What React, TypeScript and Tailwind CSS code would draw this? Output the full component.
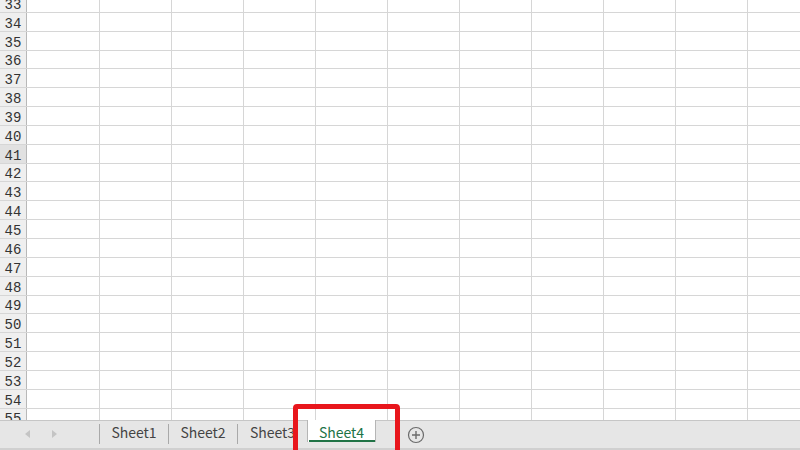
import React from "react";

const rows = Array.from({ length: 23 }, (_, i) => 33 + i);
const cols = Array.from({ length: 10 }, (_, i) => i);

function PlusIcon() {
  return (
    <svg width="18" height="18" viewBox="0 0 18 18" fill="none">
      <circle cx="9" cy="9" r="7.5" stroke="#6b6b6b" strokeWidth="1.2" />
      <path d="M9 5v8M5 9h8" stroke="#6b6b6b" strokeWidth="1.4" />
    </svg>
  );
}

function Tab({ name, last }: { name: string; last?: boolean }) {
  return (
    <div className={`w-[69px] my-[3px] h-[20px] flex items-center justify-center pb-[5px] text-[14px] leading-none text-[#444] ${last ? "" : "border-r border-[#a9a9a9]"}`}>
      {name}
    </div>
  );
}

export default function App() {
  return (
    <div className="relative w-[800px] h-[450px] bg-white overflow-hidden flex flex-col" style={{ fontFamily: '"Noto Sans CJK SC", "Noto Sans", sans-serif' }}>
      {/* grid */}
      <div className="h-[420px] overflow-hidden">
        <div className="-mt-[6px]">
          {rows.map((r) => (
            <div key={r} className="flex h-[18.85px] border-b border-[#d6d6d6]">
              <div
                className={`w-[27px] shrink-0 flex items-end justify-center leading-none border-r border-[#b8b8b8] text-[14px] text-[#333] ${r === 41 ? "bg-[#e1e1e1]" : "bg-[#efefef]"}`}
                style={{ fontFamily: '"Liberation Mono", monospace' }}
              >
                {r}
              </div>
              <div className="w-[73px] shrink-0 border-r border-[#d6d6d6]" />
              {cols.map((c) => (
                <div key={c} className="w-[72px] shrink-0 border-r border-[#d6d6d6]" />
              ))}
            </div>
          ))}
        </div>
      </div>

      {/* sheet tab bar */}
      <div className="h-[30px] flex bg-[#e6e6e6] border-t border-[#c6c6c6] border-b-2 border-b-[#d0d0d0]">
        <div className="w-[100px] flex items-center pl-[25px] gap-[22px] border-r border-[#a9a9a9] my-[3px] h-[20px]">
          <span className="w-0 h-0 border-y-[4px] border-y-transparent border-r-[5px] border-r-[#c4c4c4]" />
          <span className="w-0 h-0 border-y-[4px] border-y-transparent border-l-[5px] border-l-[#c4c4c4]" />
        </div>
        <Tab name="Sheet1" />
        <Tab name="Sheet2" />
        <Tab name="Sheet3" last />
        <div className="w-[69px] h-[22px] -mt-px bg-white border-x border-[#b5b5b5] flex flex-col items-center">
          <div className="flex-1 flex items-center pt-[3px] text-[14px] leading-none text-[#217346]">Sheet4</div>
          <div className="w-[66px] h-[2px] bg-[#217346]" />
        </div>
        <div className="ml-[31px] flex items-center">
          <PlusIcon />
        </div>
      </div>

      {/* annotation */}
      <div className="absolute left-[293px] top-[404px] w-[107px] h-[60px] border-[5px] border-[#e8161c] rounded-[4px]" />
    </div>
  );
}
